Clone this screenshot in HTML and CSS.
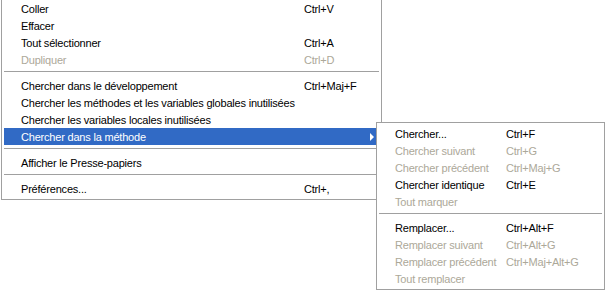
FILE: index.html
```html
<!DOCTYPE html>
<html lang="fr">
<head>
  <meta charset="UTF-8" />
  <title>Menu contextuel</title>
  <link rel="stylesheet" href="styles.css">
</head>
<body>

  <div class="stage">
    <ul class="menu main-menu">
      <li class="item"><span class="label">Coller</span><span class="key">Ctrl+V</span></li>
      <li class="item"><span class="label">Effacer</span></li>
      <li class="item"><span class="label">Tout sélectionner</span><span class="key">Ctrl+A</span></li>
      <li class="item off"><span class="label">Dupliquer</span><span class="key">Ctrl+D</span></li>
      <li class="sep"></li>
      <li class="item"><span class="label">Chercher dans le développement</span><span class="key">Ctrl+Maj+F</span></li>
      <li class="item"><span class="label">Chercher les méthodes et les variables globales inutilisées</span></li>
      <li class="item"><span class="label">Chercher les variables locales inutilisées</span></li>
      <li class="item active"><span class="label">Chercher dans la méthode</span><span class="arrow"></span></li>
      <li class="sep"></li>
      <li class="item"><span class="label">Afficher le Presse-papiers</span></li>
      <li class="sep"></li>
      <li class="item"><span class="label">Préférences...</span><span class="key">Ctrl+,</span></li>
    </ul>

    <ul class="menu sub-menu">
      <li class="item"><span class="label">Chercher...</span><span class="key">Ctrl+F</span></li>
      <li class="item off"><span class="label">Chercher suivant</span><span class="key">Ctrl+G</span></li>
      <li class="item off"><span class="label">Chercher précédent</span><span class="key">Ctrl+Maj+G</span></li>
      <li class="item"><span class="label">Chercher identique</span><span class="key">Ctrl+E</span></li>
      <li class="item off"><span class="label">Tout marquer</span></li>
      <li class="sep"></li>
      <li class="item"><span class="label">Remplacer...</span><span class="key">Ctrl+Alt+F</span></li>
      <li class="item off"><span class="label">Remplacer suivant</span><span class="key">Ctrl+Alt+G</span></li>
      <li class="item off"><span class="label">Remplacer précédent</span><span class="key">Ctrl+Maj+Alt+G</span></li>
      <li class="item off"><span class="label">Tout remplacer</span></li>
    </ul>
  </div>

</body>
</html>
```

FILE: styles.css
```css
:root {
  --border: #a0a0a0;
  --muted: #aca899;
  --select: #316ac5;
}

* {
  box-sizing: border-box;
}

body {
  margin: 0;
  background-color: #fff;
  color: #000;
  font-family: Tahoma, 'Liberation Sans', Arial, sans-serif;
  font-size: 11px;
  letter-spacing: -0.2px;
  overflow: hidden;
}

.stage {
  position: relative;
  width: 606px;
  height: 293px;
}

.menu {
  list-style: none;
  margin: 0;
  padding: 2px;
  background-color: #fff;
  border: 1px solid var(--border);
}

.main-menu {
  width: 381px;
  margin: -3px 0 0 1px;
}

/* the sub menu opens over the right edge of the main one */
.sub-menu {
  position: absolute;
  left: 376px;
  top: 125px;
  width: 229px;
}

.item {
  position: relative;
  display: flex;
  align-items: center;
  height: 17px;
  padding-top: 1px;
  white-space: nowrap;
}

.main-menu .label {
  width: 300px;
  padding-left: 17px;
}

.sub-menu .label {
  width: 127px;
  padding-left: 16px;
}

.off {
  color: var(--muted);
}

.active {
  background-color: var(--select);
  color: #fff;
}

.arrow {
  position: absolute;
  right: 5px;
  top: 5px;
  border-left: 4px solid #fff;
  border-top: 4px solid transparent;
  border-bottom: 4px solid transparent;
}

.sep {
  height: 9px;
  padding-top: 3px;
}

.sep::before {
  content: "";
  display: block;
  border-top: 1px solid var(--border);
}
```
